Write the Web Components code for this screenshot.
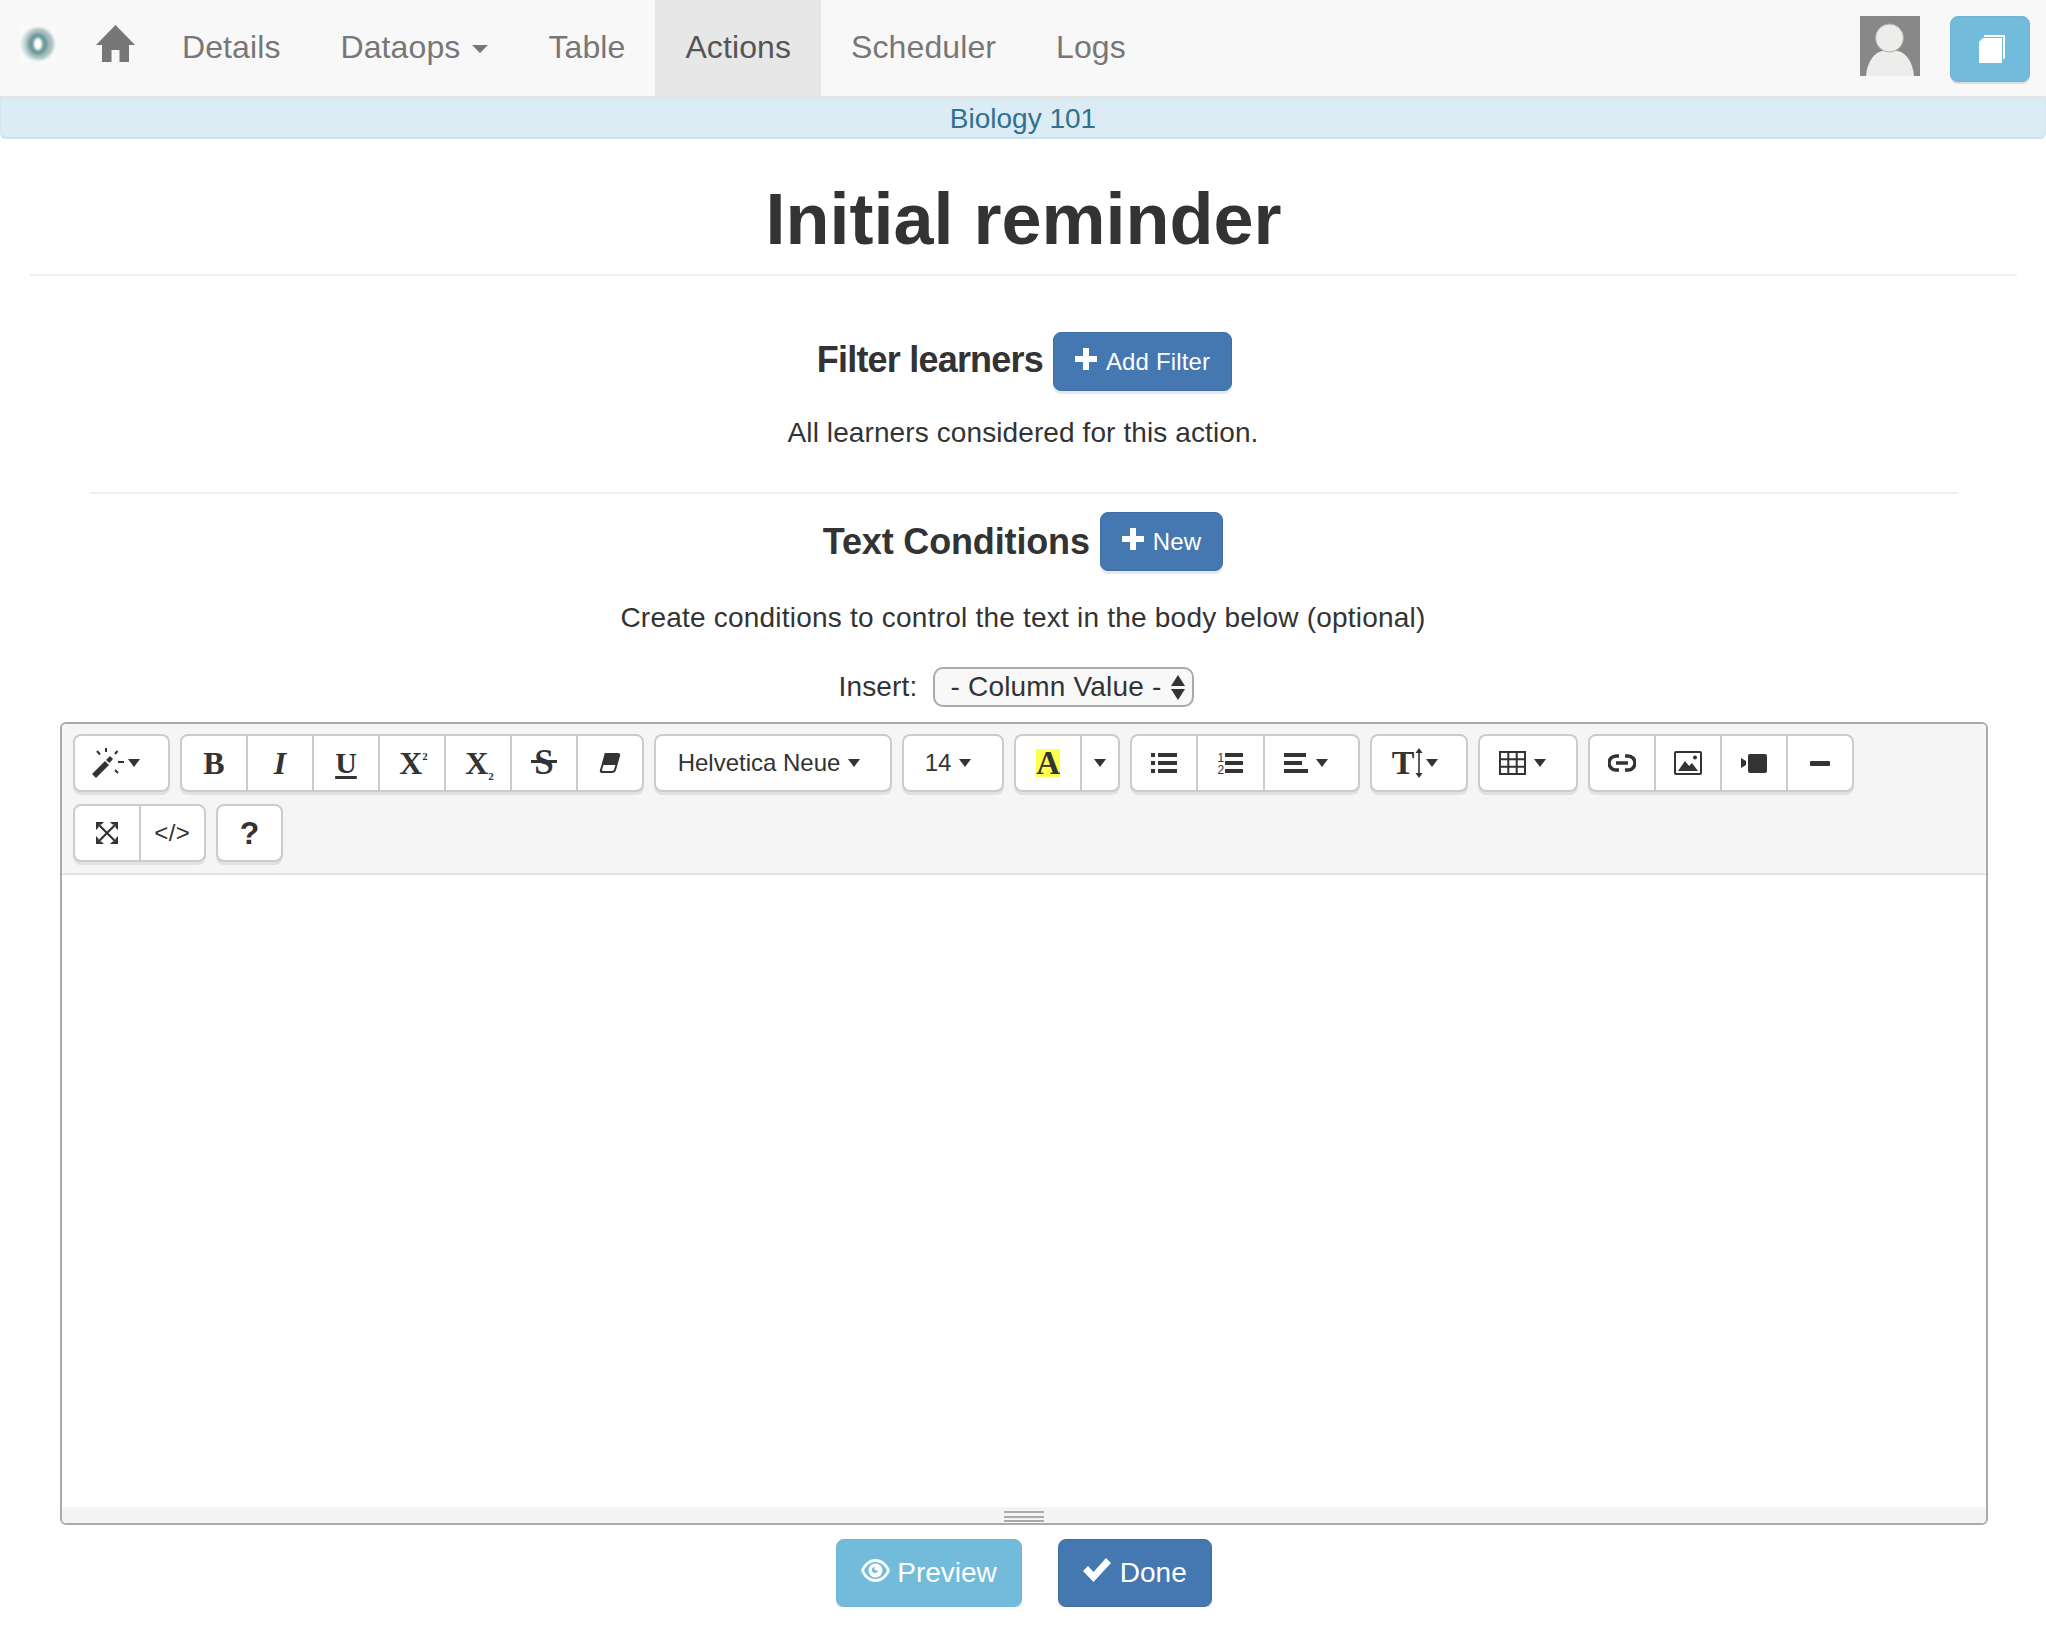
<!DOCTYPE html>
<html>
<head>
<meta charset="utf-8">
<title>Initial reminder</title>
<style>
  html,body{margin:0;padding:0;background:#fff;}
  body{font-family:"Liberation Sans",Arial,sans-serif;color:#333;font-size:28px;}
  svg{display:block;}
</style>
</head>
<body>
<app-nav>
  <nav-link>Details</nav-link>
  <nav-link caret>Dataops</nav-link>
  <nav-link>Table</nav-link>
  <nav-link active>Actions</nav-link>
  <nav-link>Scheduler</nav-link>
  <nav-link>Logs</nav-link>
</app-nav>
<course-bar>Biology 101</course-bar>
<page-title>Initial reminder</page-title>

<section-head style="padding-left:3px">
  Filter learners
  <ui-btn slot="action" icon="plus" size="small">Add Filter</ui-btn>
</section-head>
<plain-note top="22" bottom="39" style="letter-spacing:.1px">All learners considered for this action.</plain-note>
<page-rule></page-rule>
<section-head top="18" strong>
  Text Conditions
  <ui-btn slot="action" icon="plus" size="small">New</ui-btn>
</section-head>
<plain-note top="27" bottom="29" style="letter-spacing:.22px">Create conditions to control the text in the body below (optional)</plain-note>
<insert-row>- Column Value -</insert-row>

<text-editor>
  <tool-group w="97">
    <tool-btn style="gap:4px;padding-right:12px">
      <svg width="32" height="30" viewBox="0 0 32 30" fill="#333"><path d="M0 26 L13 13 L17 17 L4 30 Z"/><path d="M14 12 L18 8 L21 11 L17.500 15 Z"/><path d="M14 0v4M5 3l3 3.500M25.500 3l-2.500 3M26 14h6M23 22l3 3" stroke="#333" stroke-width="2" fill="none"/></svg>
      <tool-caret></tool-caret>
    </tool-btn>
  </tool-group>
  <tool-group w="464">
    <tool-btn><b style="font:bold 32px 'Liberation Serif',serif">B</b></tool-btn>
    <tool-btn><i style="font:italic bold 32px 'Liberation Serif',serif">I</i></tool-btn>
    <tool-btn><span style="font:bold 30px 'Liberation Serif',serif;text-decoration:underline;text-underline-offset:3px">U</span></tool-btn>
    <tool-btn><span style="font:bold 32px 'Liberation Serif',serif;margin-left:3px">X<sup style="font-size:11px;vertical-align:14px;line-height:0">2</sup></span></tool-btn>
    <tool-btn><span style="font:bold 32px 'Liberation Serif',serif;margin-left:3px">X<sub style="font-size:11px;vertical-align:-6px;line-height:0">2</sub></span></tool-btn>
    <tool-btn><span style="font:bold 35px/36px 'Liberation Serif',serif;position:relative;display:block">S<i style="position:absolute;left:-3px;right:-3px;top:15px;height:3px;background:#333"></i></span></tool-btn>
    <tool-btn>
      <svg width="22" height="22" viewBox="0 0 22 22"><path d="M6 1 H19 Q22 1 21 4 L17 18 Q16 21 13 21 H3 Q0 21 1 18 L5 4 Q5.500 1 6 1 Z" fill="#333"/><path d="M4.500 13 H16.500 L15 17.500 Q14.500 19 13 19 H4 Q2.800 19 3.100 17.500 Z" fill="#fff"/></svg>
    </tool-btn>
  </tool-group>
  <tool-group w="238">
    <tool-btn style="padding-right:8px;gap:8px"><span style="font-size:24px">Helvetica Neue</span><tool-caret></tool-caret></tool-btn>
  </tool-group>
  <tool-group w="102">
    <tool-btn style="padding-right:10px;gap:8px"><span style="font-size:24px">14</span><tool-caret></tool-caret></tool-btn>
  </tool-group>
  <tool-group w="106">
    <tool-btn grow="1.800"><span style="font:bold 33px/28px 'Liberation Serif',serif;background:#ffff4d;display:block;width:24px;height:28px;text-align:center">A</span></tool-btn>
    <tool-btn><tool-caret></tool-caret></tool-btn>
  </tool-group>
  <tool-group w="230">
    <tool-btn>
      <svg width="26" height="22" viewBox="0 0 26 22" fill="#333"><path d="M0 1h4v4h-4zM7 1h19v4h-19zM0 9h4v4h-4zM7 9h19v4h-19zM0 17h4v4h-4zM7 17h19v4h-19z"/></svg>
    </tool-btn>
    <tool-btn style="gap:1px">
      <span style="display:flex;flex-direction:column;font-size:12px;line-height:12px;color:#333;margin-top:2px">
        <span>1</span><span>2</span>
      </span>
      <svg width="18" height="22" viewBox="0 0 18 22" fill="#333"><path d="M0 1h18v4h-18zM0 9h18v4h-18zM0 17h18v4h-18z"/></svg>
    </tool-btn>
    <tool-btn grow="1.300" style="gap:8px;padding-right:10px">
      <svg width="24" height="22" viewBox="0 0 24 22" fill="#333"><path d="M0 1h22v4h-22zM0 9h18v4h-18zM0 17h24v4h-24z"/></svg>
      <tool-caret></tool-caret>
    </tool-btn>
  </tool-group>
  <tool-group w="98">
    <tool-btn style="gap:1px;padding-right:8px">
      <span style="font:bold 34px 'Liberation Serif',serif">T</span>
      <svg width="8" height="30" viewBox="0 0 8 30" fill="#333" style="margin-right:2px"><path d="M4 0 L7.500 5 H4.800 V25 H7.500 L4 30 L.5 25 H3.200 V5 H.5 Z"/></svg>
      <tool-caret></tool-caret>
    </tool-btn>
  </tool-group>
  <tool-group w="100">
    <tool-btn style="gap:8px;padding-right:12px">
      <svg width="27" height="24" viewBox="0 0 27 24" fill="none" stroke="#333" stroke-width="2"><path d="M1 1h25v22h-25zM9.300 1v22M17.700 1v22M1 8.300h25M1 15.700h25"/></svg>
      <tool-caret></tool-caret>
    </tool-btn>
  </tool-group>
  <tool-group w="266">
    <tool-btn>
      <svg width="28" height="18" viewBox="0 0 28 18" fill="none" stroke="#333" stroke-width="3.500"><path d="M11 2 H8 A7 7 0 0 0 8 16 H11 M17 2 H20 A7 7 0 0 1 20 16 H17 M8 9 H20"/></svg>
    </tool-btn>
    <tool-btn>
      <svg width="28" height="24" viewBox="0 0 28 24"><rect x="1" y="1" width="26" height="22" rx="1" fill="none" stroke="#333" stroke-width="2"/><path d="M4 20 L11 10 L15 15 L18 12 L24 20 Z" fill="#333"/><circle cx="21" cy="6.500" r="2" fill="#333"/></svg>
    </tool-btn>
    <tool-btn>
      <svg width="26" height="22" viewBox="0 0 26 22" fill="#333"><path d="M0 6 L5 9 V13 L0 16 Z"/><rect x="7" y="2" width="19" height="19" rx="2"/></svg>
    </tool-btn>
    <tool-btn>
      <svg width="20" height="5" viewBox="0 0 20 5"><rect width="20" height="5" rx="1" fill="#333"/></svg>
    </tool-btn>
  </tool-group>
  <tool-group w="133">
    <tool-btn>
      <svg width="22" height="22" viewBox="0 0 22 22" fill="#333"><path d="M0 0h8L5.500 2.500H4L2.500 4v1.500L0 8zM22 0v8l-2.500-2.500V4L18 2.500h-1.500L14 0zM0 22v-8l2.500 2.500V18L4 19.500h1.500L8 22zM22 22h-8l2.500-2.500H18l1.500-1.500v-1.500L22 14z"/><path d="M3 3 19 19M19 3 3 19" stroke="#333" stroke-width="2.200" fill="none"/></svg>
    </tool-btn>
    <tool-btn><span style="font-size:24px;letter-spacing:.5px">&lt;/&gt;</span></tool-btn>
  </tool-group>
  <tool-group w="67">
    <tool-btn><b style="font-size:32px">?</b></tool-btn>
  </tool-group>
</text-editor>

<action-bar>
  <ui-btn icon="eye" kind="info">Preview</ui-btn>
  <ui-btn icon="check" style="gap:9px">Done</ui-btn>
</action-bar>

<script>
const ICONS = {
  plus: '<svg width="22" height="22" viewBox="0 0 22 22" fill="currentColor"><path d="M8 0h6v8h8v6h-8v8h-6v-8h-8v-6h8z"/></svg>',
  eye: '<svg width="29" height="23" viewBox="0 0 29 23"><path fill-rule="evenodd" fill="currentColor" d="M14.500 0C22 0 27 6 29 11.500 27 17 22 23 14.500 23 7 23 2 17 0 11.500 2 6 7 0 14.500 0ZM14.500 3C9 3 5 7 3 11.500 5 16 9 20 14.500 20 20 20 24 16 26 11.500 24 7 20 3 14.500 3Z"/><path fill-rule="evenodd" fill="currentColor" d="M14.500 4.500a7 7 0 1 1 0 14 7 7 0 0 1 0-14ZM14 8a3 3 0 1 0 3 3 2 2 0 0 1-3-3Z"/></svg>',
  check: '<svg width="28" height="24" viewBox="0 0 28 24" fill="currentColor"><path d="M0 13 L5 8 L10.500 14 L23 0 L28 5 L10.500 24 Z"/></svg>'
};

class AppNav extends HTMLElement{
  constructor(){
    super();
    this.attachShadow({mode: 'open'});
    this.shadowRoot.innerHTML = `
      <style>
        :host{display:flex;height:96px;background:#f8f8f8;border-bottom:1px solid #e7e7e7;font-size:32px;}
        .logo{margin:26px 40px 0 20px;width:36px;height:36px;}
        .home{margin:25px 17px 0 0;width:39px;height:37px;color:#777;}
        .links{display:flex;flex:1;}
        .avatar{margin:16px 30px 0 0;width:60px;height:60px;}
        .book{margin:16px 16px 0 0;width:80px;height:66px;box-sizing:border-box;border:1px solid #6bb5d6;border-radius:8px;background:#73bbdb;
          box-shadow:0 2px 0 rgba(0,0,0,.1);display:flex;align-items:center;justify-content:center;}
        .book svg{margin-left:4px;}
      </style>
      <svg class="logo" viewBox="0 0 36 36">
        <defs><filter id="soft"><feGaussianBlur stdDeviation="0.8"/></filter></defs>
        <rect width="36" height="36" fill="#fbfbfb"/>
        <g filter="url(#soft)">
          <ellipse cx="18" cy="18" rx="17" ry="17" fill="#cfe2df"/>
          <ellipse cx="19" cy="18" rx="14" ry="15" fill="#a9bcbf"/>
          <ellipse cx="18" cy="18" rx="10" ry="11" fill="#6a9c9c"/>
          <ellipse cx="18" cy="18" rx="4" ry="6" fill="#fff"/>
        </g>
      </svg>
      <svg class="home" viewBox="0 0 39 37" fill="currentColor"><path d="M19.500 0 L39 20 H33 V37 H23.500 V25 H15.500 V37 H6 V20 H0 Z"/></svg>
      <div class="links"><slot></slot></div>
      <svg class="avatar" viewBox="0 0 60 60">
        <rect width="60" height="60" fill="#888"/>
        <path d="M6 60 C7 46 14 37 22 35 H38 C46 37 53 46 54 60 Z" fill="#ededeb"/>
        <circle cx="29.500" cy="22" r="14" fill="#ededeb" stroke="#aaa" stroke-width="1"/>
      </svg>
      <div class="book">
        <svg width="26" height="28" viewBox="0 0 26 28" fill="#fff"><path d="M5 0 H26 V23 L24 24.500 V2 H5 Z"/><path d="M0 7 L4 3 H23 V28 H0 Z"/></svg>
      </div>`;
  }
}
customElements.define('app-nav', AppNav);

class NavLink extends HTMLElement{
  constructor(){
    super();
    this.attachShadow({mode: 'open'});
    this.shadowRoot.innerHTML = `
      <style>
        :host{display:flex;align-items:center;padding:0 30px;color:#777;height:96px;padding-bottom:2px;box-sizing:border-box;letter-spacing:.1px;}
        :host([active]){background:#e7e7e7;color:#555;}
        .caret{display:none;width:0;height:0;margin-left:12px;margin-top:4px;border:8px solid transparent;border-top-color:currentColor;border-bottom:0;}
        :host([caret]) .caret{display:block;}
      </style>
      <slot></slot><span class="caret"></span>`;
  }
}
customElements.define('nav-link', NavLink);

class CourseBar extends HTMLElement{
  constructor(){
    super();
    this.attachShadow({mode: 'open'});
    this.shadowRoot.innerHTML = `
      <style>
        :host{display:block;height:42px;box-sizing:border-box;background:#dcecf5;border:1px solid #cfe8f1;border-bottom:2px solid #c4e4ef;
          border-radius:0 0 6px 6px;color:#31708f;text-align:center;line-height:42px;font-size:28px;}
      </style>
      <slot></slot>`;
  }
}
customElements.define('course-bar', CourseBar);

class PageTitle extends HTMLElement{
  constructor(){
    super();
    this.attachShadow({mode: 'open'});
    this.shadowRoot.innerHTML = `
      <style>
        :host{display:block;margin:0 29px 56px 30px;padding:41px 0 15px;border-bottom:2px solid #eee;text-align:center;font-size:72px;font-weight:bold;line-height:79px;}
      </style>
      <slot></slot>`;
  }
}
customElements.define('page-title', PageTitle);

class SectionHead extends HTMLElement{
  constructor(){
    super();
    this.attachShadow({mode: 'open'});
    this.shadowRoot.innerHTML = `
      <style>
        :host{display:flex;justify-content:center;align-items:center;gap:10px;font-size:36px;font-weight:bold;height:59px;}
        h4{margin:0;font:inherit;letter-spacing:-.15px;}
        :host(:not([strong])) h4{letter-spacing:-.8px;margin-top:-3px;}
      </style>
      <h4><slot></slot></h4><slot name="action"></slot>`;
  }
  connectedCallback(){
    if(this.getAttribute('top')){
      this.style.marginTop = this.getAttribute('top') + 'px';
    }
  }
}
customElements.define('section-head', SectionHead);

class UiBtn extends HTMLElement{
  constructor(){
    super();
    this.attachShadow({mode: 'open'});
    this.shadowRoot.innerHTML = `
      <style>
        :host{display:inline-flex;align-items:center;justify-content:center;gap:7px;box-sizing:border-box;height:68px;padding:0 24px;
          background:#4577b0;border:1px solid #3f6ea6;border-radius:8px;color:#fff;font-size:28px;font-weight:normal;box-shadow:0 3px 0 rgba(0,0,0,.09);}
        :host([kind=info]){background:#73bbdb;border-color:#6bb5d6;}
        :host([size=small]){height:59px;padding:0 21px;gap:9px;font-size:24px;letter-spacing:.15px;}
        span{display:block;}
      </style>
      <span class="icon"></span><slot></slot>`;
  }
  connectedCallback(){
    this.shadowRoot.querySelector('.icon').innerHTML = ICONS[this.getAttribute('icon')] || '';
  }
}
customElements.define('ui-btn', UiBtn);

class PlainNote extends HTMLElement{
  constructor(){
    super();
    this.attachShadow({mode: 'open'});
    this.shadowRoot.innerHTML = `
      <style>:host{display:block;text-align:center;line-height:40px;font-size:28px;}</style>
      <slot></slot>`;
  }
  connectedCallback(){
    this.style.marginTop = this.getAttribute('top') + 'px';
    this.style.marginBottom = this.getAttribute('bottom') + 'px';
  }
}
customElements.define('plain-note', PlainNote);

class PageRule extends HTMLElement{
  constructor(){
    super();
    this.attachShadow({mode: 'open'});
    this.shadowRoot.innerHTML = `<style>:host{display:block;margin:0 88px 0 90px;border-top:2px solid #eee;}</style>`;
  }
}
customElements.define('page-rule', PageRule);

class InsertRow extends HTMLElement{
  constructor(){
    super();
    this.attachShadow({mode: 'open'});
    this.shadowRoot.innerHTML = `
      <style>
        :host{display:flex;justify-content:center;align-items:center;gap:15px;height:40px;font-size:28px;margin-bottom:15px;padding-right:14px;letter-spacing:.18px;}
        .select{display:flex;align-items:center;justify-content:space-between;box-sizing:border-box;width:261px;height:40px;padding:0 7px 0 16px;
          border:2px solid #aaa;border-radius:10px;background:#f8f8f8;font-size:28px;}
        .arrows{display:flex;flex-direction:column;gap:3px;}
        .arrows i{display:block;width:0;height:0;border-left:7px solid transparent;border-right:7px solid transparent;}
        .up{border-bottom:11px solid #333;}
        .down{border-top:11px solid #333;}
      </style>
      <span>Insert:</span>
      <span class="select"><slot></slot><span class="arrows"><i class="up"></i><i class="down"></i></span></span>`;
  }
}
customElements.define('insert-row', InsertRow);

class TextEditor extends HTMLElement{
  constructor(){
    super();
    this.attachShadow({mode: 'open'});
    this.shadowRoot.innerHTML = `
      <style>
        :host{display:flex;flex-direction:column;box-sizing:border-box;height:803px;margin:0 58px 0 60px;border:2px solid #aaa;border-radius:6px;overflow:hidden;}
        .bar{display:flex;flex-wrap:wrap;gap:12px 10px;align-content:flex-start;box-sizing:border-box;height:151px;padding:10px 11px 0;background:#f5f5f5;border-bottom:2px solid #e4e4e4;}
        .body{flex:1;background:#fff;}
        .grip{height:16px;background:#f4f4f4;display:flex;flex-direction:column;align-items:center;gap:2.500px;padding-top:4px;box-sizing:border-box;}
        .grip i{display:block;width:40px;height:2px;background:#aaa;}
      </style>
      <div class="bar"><slot></slot></div>
      <div class="body"></div>
      <div class="grip"><i></i><i></i><i></i></div>`;
  }
}
customElements.define('text-editor', TextEditor);

class ToolGroup extends HTMLElement{
  constructor(){
    super();
    this.attachShadow({mode: 'open'});
    this.shadowRoot.innerHTML = `
      <style>
        :host{display:flex;box-sizing:border-box;height:58px;background:#fff;border:2px solid #ccc;border-radius:8px;box-shadow:0 3px 0 rgba(0,0,0,.08);}
      </style>
      <slot></slot>`;
  }
  connectedCallback(){
    this.style.width = this.getAttribute('w') + 'px';
  }
}
customElements.define('tool-group', ToolGroup);

class ToolBtn extends HTMLElement{
  constructor(){
    super();
    this.attachShadow({mode: 'open'});
    this.shadowRoot.innerHTML = `
      <style>
        :host{display:flex;flex:1 1 0;align-items:center;justify-content:center;gap:7px;color:#333;font-size:24px;}
        :host(:not(:first-child)){border-left:2px solid #ccc;}
      </style>
      <slot></slot>`;
  }
  connectedCallback(){
    if(this.getAttribute('grow')){
      this.style.flexGrow = this.getAttribute('grow');
    }
  }
}
customElements.define('tool-btn', ToolBtn);

class ToolCaret extends HTMLElement{
  constructor(){
    super();
    this.attachShadow({mode: 'open'});
    this.shadowRoot.innerHTML = `
      <style>
        :host{display:block;width:0;height:0;border-left:6px solid transparent;border-right:6px solid transparent;border-top:8px solid #333;}
      </style>`;
  }
}
customElements.define('tool-caret', ToolCaret);

class ActionBar extends HTMLElement{
  constructor(){
    super();
    this.attachShadow({mode: 'open'});
    this.shadowRoot.innerHTML = `
      <style>:host{display:flex;justify-content:center;gap:36px;margin-top:14px;padding-left:2px;}</style>
      <slot></slot>`;
  }
}
customElements.define('action-bar', ActionBar);
</script>
</body>
</html>
